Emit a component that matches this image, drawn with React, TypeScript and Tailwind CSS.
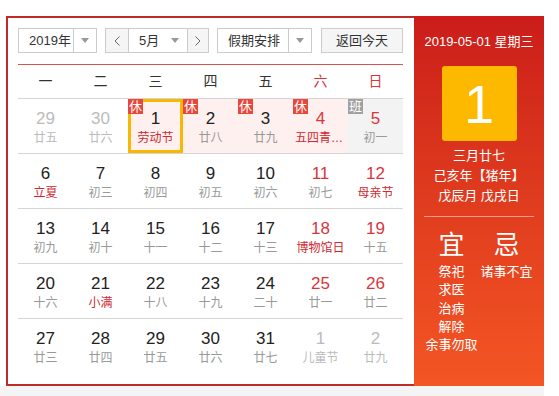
import type { ReactNode } from "react";

const font = "font-['Liberation_Sans','Noto_Sans_CJK_SC',sans-serif]";

type Day = {
  n: number;
  sub: string;
  out?: boolean;
  fest?: boolean;
  badge?: "休" | "班";
  today?: boolean;
};

const weeks: Day[][] = [
  [
    { n: 29, sub: "廿五", out: true },
    { n: 30, sub: "廿六", out: true },
    { n: 1, sub: "劳动节", fest: true, badge: "休", today: true },
    { n: 2, sub: "廿八", badge: "休" },
    { n: 3, sub: "廿九", badge: "休" },
    { n: 4, sub: "五四青年节", fest: true, badge: "休" },
    { n: 5, sub: "初一", badge: "班" },
  ],
  [
    { n: 6, sub: "立夏", fest: true },
    { n: 7, sub: "初三" },
    { n: 8, sub: "初四" },
    { n: 9, sub: "初五" },
    { n: 10, sub: "初六" },
    { n: 11, sub: "初七" },
    { n: 12, sub: "母亲节", fest: true },
  ],
  [
    { n: 13, sub: "初九" },
    { n: 14, sub: "初十" },
    { n: 15, sub: "十一" },
    { n: 16, sub: "十二" },
    { n: 17, sub: "十三" },
    { n: 18, sub: "博物馆日", fest: true },
    { n: 19, sub: "十五" },
  ],
  [
    { n: 20, sub: "十六" },
    { n: 21, sub: "小满", fest: true },
    { n: 22, sub: "十八" },
    { n: 23, sub: "十九" },
    { n: 24, sub: "二十" },
    { n: 25, sub: "廿一" },
    { n: 26, sub: "廿二" },
  ],
  [
    { n: 27, sub: "廿三" },
    { n: 28, sub: "廿四" },
    { n: 29, sub: "廿五" },
    { n: 30, sub: "廿六" },
    { n: 31, sub: "廿七" },
    { n: 1, sub: "儿童节", out: true, fest: true },
    { n: 2, sub: "廿九", out: true },
  ],
];

const weekdays = ["一", "二", "三", "四", "五", "六", "日"];

function Caret() {
  return (
    <svg width="8" height="5" viewBox="0 0 8 5">
      <path d="M0 0h8L4 5z" fill="#999" />
    </svg>
  );
}

function Chevron({ dir }: { dir: "l" | "r" }) {
  return (
    <svg width="6" height="10" viewBox="0 0 6 10">
      <path
        d={dir === "l" ? "M5.5 0.5L1 5l4.5 4.5" : "M0.5 0.5L5 5L0.5 9.5"}
        fill="none"
        stroke="#666"
        strokeWidth="1"
      />
    </svg>
  );
}

function Select({ w, children }: { w: string; children: ReactNode }) {
  return (
    <div className={`flex h-[25px] ${w} border border-[#ccc] bg-white`}>
      <div className="flex flex-1 items-center pl-[10px] text-[13px] text-[#333]">{children}</div>
      <div className="flex w-[23px] items-center justify-center border-l border-[#ccc]">
        <Caret />
      </div>
    </div>
  );
}

function Cell({ d, col }: { d: Day; col: number }) {
  const holiday = d.badge === "休";
  const work = d.badge === "班";
  const bg = holiday ? "bg-[#fff0f0]" : work ? "bg-[#f3f3f3]" : "";
  const numColor = d.out ? "text-[#bbb]" : col >= 5 ? "text-[#d9363b]" : "text-[#222]";
  const subColor = d.out ? "text-[#bbb]" : d.fest ? "text-[#d0282e]" : "text-[#999]";
  return (
    <div className={`relative flex h-[54px] flex-col items-center pt-[10px] ${bg}`}>
      {d.today ? (
        <div className="pointer-events-none absolute inset-0 border-[3px] border-[#f6b800]" />
      ) : null}
      {d.badge ? (
        <span
          className={`absolute left-0 top-0 z-10 h-[15px] w-[15px] text-center text-[13px] leading-[15px] text-white ${
            holiday ? "bg-[#e8473b]" : "bg-[#a0a0a0]"
          }`}
        >
          {d.badge}
        </span>
      ) : null}
      <span className={`text-[17px] leading-[20px] ${numColor}`}>{d.n}</span>
      <span className={`w-full truncate px-[2px] text-center text-[12px] leading-[18px] ${subColor}`}>
        {d.sub}
      </span>
    </div>
  );
}

export default function App() {
  return (
    <div className={`h-[396px] w-[559px] bg-white ${font}`}>
      <div className="flex w-[544px] pl-[6px] pt-4">
        {/* left: month grid */}
        <div className="h-[370px] w-[408px] border-2 border-r-0 border-[#bf2a2a] pl-[10px] pr-[11px] pt-[10px]">
          <div className="flex h-[25px] items-center">
            <Select w="w-[79px]">2019年</Select>
            <div className="ml-[8px] flex h-[25px] w-[104px] border border-[#ccc]">
              <div className="flex w-[22px] items-center justify-center bg-[#f5f5f5]">
                <Chevron dir="l" />
              </div>
              <div className="flex w-[60px] items-center border-x border-[#ccc] bg-white pl-[10px] text-[13px] text-[#333]">
                <span className="flex-1">5月</span>
                <span className="mr-[8px] flex">
                  <Caret />
                </span>
              </div>
              <div className="flex flex-1 items-center justify-center bg-[#f5f5f5]">
                <Chevron dir="r" />
              </div>
            </div>
            <div className="ml-[8px]">
              <Select w="w-[95px]">假期安排</Select>
            </div>
            <button className="ml-[9px] flex h-[25px] w-[82px] items-center justify-center border border-[#ccc] bg-[#f5f5f5] text-[13px] text-[#333]">
              返回今天
            </button>
          </div>

          <div className="mt-[11px] border-t border-[#d9534f]">
            <div className="grid h-[34px] grid-cols-7 border-b border-[#d5d5d5]">
              {weekdays.map((w, i) => (
                <div
                  key={w}
                  className={`flex items-center justify-center text-[14px] ${
                    i >= 5 ? "text-[#d9363b]" : "text-[#333]"
                  }`}
                >
                  {w}
                </div>
              ))}
            </div>
            {weeks.map((week, r) => (
              <div
                key={r}
                className={`grid grid-cols-7 ${r < weeks.length - 1 ? "border-b border-[#d5d5d5]" : ""}`}
              >
                {week.map((d, c) => (
                  <Cell key={c} d={d} col={c} />
                ))}
              </div>
            ))}
          </div>
        </div>

        {/* right: day detail */}
        <div className="flex h-[370px] w-[130px] flex-col items-center bg-gradient-to-b from-[#cb1c1a] to-[#f45523] pt-4 text-white">
          <div className="text-[13px] leading-[20px]">2019-05-01 星期三</div>
          <div className="mt-[14px] flex h-[75px] w-[75px] items-center justify-center rounded-[3px] bg-[#fdb900] text-[54px] leading-none">
            1
          </div>
          <div className="mt-[5px] text-center text-[13px] leading-[20px]">
            <div>三月廿七</div>
            <div>己亥年【猪年】</div>
            <div>戊辰月 戊戌日</div>
          </div>
          <div className="mt-[10px] h-px w-[110px] bg-[#f39a8a]" />
          <div className="mt-[13px] flex">
            <div className="flex w-[55px] flex-col items-center">
              <div className="text-[26px] leading-[30px]">宜</div>
              <div className="mt-[3px] text-center text-[13px] leading-[18.3px]">
                <div>祭祀</div>
                <div>求医</div>
                <div>治病</div>
                <div>解除</div>
                <div className="whitespace-nowrap">余事勿取</div>
              </div>
            </div>
            <div className="flex w-[55px] flex-col items-center">
              <div className="text-[26px] leading-[30px]">忌</div>
              <div className="mt-[3px] whitespace-nowrap text-center text-[13px] leading-[18.3px]">
                诸事不宜
              </div>
            </div>
          </div>
        </div>
      </div>
      <div className="h-[10px] w-[544px] bg-[#f4f4f4]" />
    </div>
  );
}
